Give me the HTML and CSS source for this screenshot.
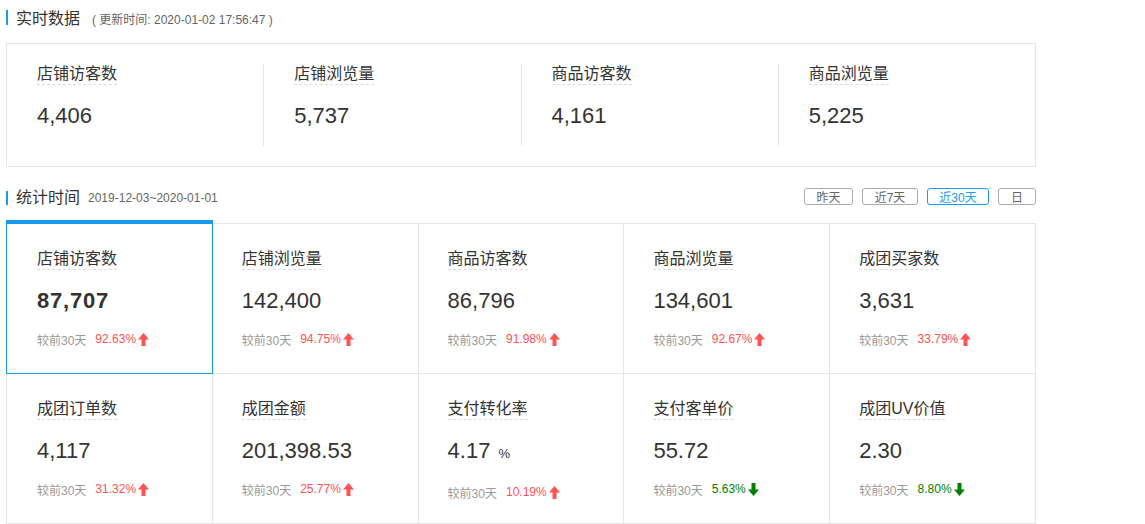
FILE: index.html
```html
<!DOCTYPE html>
<html lang="zh">
<head>
<meta charset="utf-8">
<title>数据概况</title>
<link rel="stylesheet" href="styles.css">
</head>
<body>
<div class="page">
  <div class="sec-head first">
    <span class="sec-title">实时数据</span>
    <span class="sec-sub">( 更新时间: 2020-01-02 17:56:47 )</span>
  </div>
  <div class="rt-box">
    <div class="rt-item"><div class="label">店铺访客数</div><div class="num">4,406</div></div>
    <div class="rt-item"><div class="label">店铺浏览量</div><div class="num">5,737</div></div>
    <div class="rt-item"><div class="label">商品访客数</div><div class="num">4,161</div></div>
    <div class="rt-item"><div class="label">商品浏览量</div><div class="num">5,225</div></div>
  </div>

  <div class="sec-head second">
    <span class="sec-title">统计时间</span>
    <span class="sec-date">2019-12-03~2020-01-01</span>
    <div class="btns">
      <span class="btn b1">昨天</span>
      <span class="btn b2">近7天</span>
      <span class="btn b3 on">近30天</span>
      <span class="btn b4">日</span>
    </div>
  </div>

  <div class="grid">
    <div class="cell active">
      <div class="label">店铺访客数</div>
      <div class="num bold">87,707</div>
      <div class="cmp"><span class="cmp-t">较前30天</span><span class="up">92.63%</span><svg class="arr" viewBox="0 0 11 13"><path d="M5.5 0 L11 6.5 L7.5 6.5 L7.5 13 L3.5 13 L3.5 6.5 L0 6.5 Z" fill="#ff5252"/></svg></div>
    </div>
    <div class="cell">
      <div class="label">店铺浏览量</div>
      <div class="num">142,400</div>
      <div class="cmp"><span class="cmp-t">较前30天</span><span class="up">94.75%</span><svg class="arr" viewBox="0 0 11 13"><path d="M5.5 0 L11 6.5 L7.5 6.5 L7.5 13 L3.5 13 L3.5 6.5 L0 6.5 Z" fill="#ff5252"/></svg></div>
    </div>
    <div class="cell">
      <div class="label">商品访客数</div>
      <div class="num">86,796</div>
      <div class="cmp"><span class="cmp-t">较前30天</span><span class="up">91.98%</span><svg class="arr" viewBox="0 0 11 13"><path d="M5.5 0 L11 6.5 L7.5 6.5 L7.5 13 L3.5 13 L3.5 6.5 L0 6.5 Z" fill="#ff5252"/></svg></div>
    </div>
    <div class="cell">
      <div class="label">商品浏览量</div>
      <div class="num">134,601</div>
      <div class="cmp"><span class="cmp-t">较前30天</span><span class="up">92.67%</span><svg class="arr" viewBox="0 0 11 13"><path d="M5.5 0 L11 6.5 L7.5 6.5 L7.5 13 L3.5 13 L3.5 6.5 L0 6.5 Z" fill="#ff5252"/></svg></div>
    </div>
    <div class="cell">
      <div class="label">成团买家数</div>
      <div class="num">3,631</div>
      <div class="cmp"><span class="cmp-t">较前30天</span><span class="up">33.79%</span><svg class="arr" viewBox="0 0 11 13"><path d="M5.5 0 L11 6.5 L7.5 6.5 L7.5 13 L3.5 13 L3.5 6.5 L0 6.5 Z" fill="#ff5252"/></svg></div>
    </div>

    <div class="cell">
      <div class="label">成团订单数</div>
      <div class="num">4,117</div>
      <div class="cmp"><span class="cmp-t">较前30天</span><span class="up">31.32%</span><svg class="arr" viewBox="0 0 11 13"><path d="M5.5 0 L11 6.5 L7.5 6.5 L7.5 13 L3.5 13 L3.5 6.5 L0 6.5 Z" fill="#ff5252"/></svg></div>
    </div>
    <div class="cell">
      <div class="label">成团金额</div>
      <div class="num">201,398.53</div>
      <div class="cmp"><span class="cmp-t">较前30天</span><span class="up">25.77%</span><svg class="arr" viewBox="0 0 11 13"><path d="M5.5 0 L11 6.5 L7.5 6.5 L7.5 13 L3.5 13 L3.5 6.5 L0 6.5 Z" fill="#ff5252"/></svg></div>
    </div>
    <div class="cell">
      <div class="label">支付转化率</div>
      <div class="num">4.17 <span class="unit">%</span></div>
      <div class="cmp"><span class="cmp-t">较前30天</span><span class="up">10.19%</span><svg class="arr" viewBox="0 0 11 13"><path d="M5.5 0 L11 6.5 L7.5 6.5 L7.5 13 L3.5 13 L3.5 6.5 L0 6.5 Z" fill="#ff5252"/></svg></div>
    </div>
    <div class="cell">
      <div class="label">支付客单价</div>
      <div class="num">55.72</div>
      <div class="cmp"><span class="cmp-t">较前30天</span><span class="down">5.63%</span><svg class="arr" viewBox="0 0 11 13"><path d="M5.5 13 L11 6.5 L7.5 6.5 L7.5 0 L3.5 0 L3.5 6.5 L0 6.5 Z" fill="#008000"/></svg></div>
    </div>
    <div class="cell">
      <div class="label">成团UV价值</div>
      <div class="num">2.30</div>
      <div class="cmp"><span class="cmp-t">较前30天</span><span class="down">8.80%</span><svg class="arr" viewBox="0 0 11 13"><path d="M5.5 13 L11 6.5 L7.5 6.5 L7.5 0 L3.5 0 L3.5 6.5 L0 6.5 Z" fill="#008000"/></svg></div>
    </div>
  </div>
</div>
</body>
</html>
```

FILE: styles.css
```css
* { box-sizing: border-box; }
html, body { margin: 0; padding: 0; background: #fff; }
body {
  font-family: "Liberation Sans", "Noto Sans CJK SC", sans-serif;
  color: #333;
}
.page {
  width: 1036px;
  padding-left: 6px;
}
.sec-head {
  display: flex;
  align-items: center;
  height: 22px;
  border-left: 2px solid #1a9bec;
  padding-left: 8px;
}
.sec-head.first {
  margin-top: 10px;
  height: 15px;
  margin-bottom: 18px;
}
.sec-head.second {
  margin-top: 24px;
  height: 14px;
  margin-bottom: 18px;
}
.sec-title {
  font-size: 16px;
  line-height: 16px;
  color: #333;
}
.first .sec-title { padding-top: 2px; }
.sec-sub {
  font-size: 12px;
  color: #666;
  margin-left: 12px;
  padding-top: 2px;
}
.sec-date {
  font-size: 12px;
  color: #666;
  margin-left: 8px;
}
.btns {
  margin-left: auto;
  display: flex;
  gap: 9px;
  margin-top: -3px;
}
.btn {
  display: flex;
  align-items: center;
  justify-content: center;
  height: 17px;
  border: 1px solid #aaa;
  border-radius: 3px;
  font-size: 12px;
  color: #666;
  background: #fff;
}
.btn.b1 { width: 49px; }
.btn.b2 { width: 56px; }
.btn.b3 { width: 62px; }
.btn.b4 { width: 38px; }
.btn.on { border-color: #1a9bec; color: #1a9bec; }

.rt-box {
  display: flex;
  border: 1px solid #e6e6e6;
  padding: 20px 0;
  width: 1030px;
}
.rt-item {
  flex: 1;
  height: 82px;
  padding-left: 30px;
  border-left: 1px solid #e6e6e6;
}
.rt-item:first-child { border-left: none; }
.label {
  display: inline-block;
  font-size: 16px;
  line-height: 20px;
  color: #333;
  border-bottom: 1px dashed #ddd;
}
.rt-item .num {
  margin-top: 18px;
  font-size: 22px;
  line-height: 26px;
  color: #333;
}

.grid {
  display: grid;
  grid-template-columns: repeat(5, 1fr);
  width: 1030px;
  border-top: 1px solid #e6e6e6;
  border-left: 1px solid #e6e6e6;
}
.cell {
  position: relative;
  height: 150px;
  padding: 25px 0 0 29px;
  border-right: 1px solid #e6e6e6;
  border-bottom: 1px solid #e6e6e6;
}
.cell:nth-child(5n+1) { padding-left: 30px; }
.cell.active::before {
  content: "";
  position: absolute;
  left: -1px;
  right: -1px;
  top: -4px;
  bottom: -1px;
  border: 1px solid #1a9bec;
  border-top: 4px solid #1a9bec;
}
.cell .num {
  margin-top: 17px;
  font-size: 22px;
  line-height: 28px;
  color: #333;
}
.cell .num.bold {
  font-weight: bold;
  letter-spacing: 0.8px;
}
.unit {
  font-size: 13px;
  margin-left: 2px;
}
.cmp {
  margin-top: 16px;
  display: flex;
  align-items: center;
  height: 16px;
  font-size: 12px;
}
.cmp-t { color: #999; margin-right: 9px; }
.up { color: #ff5252; }
.down { color: #008000; }
.arr { width: 11px; height: 13px; margin-left: 2px; }
```
